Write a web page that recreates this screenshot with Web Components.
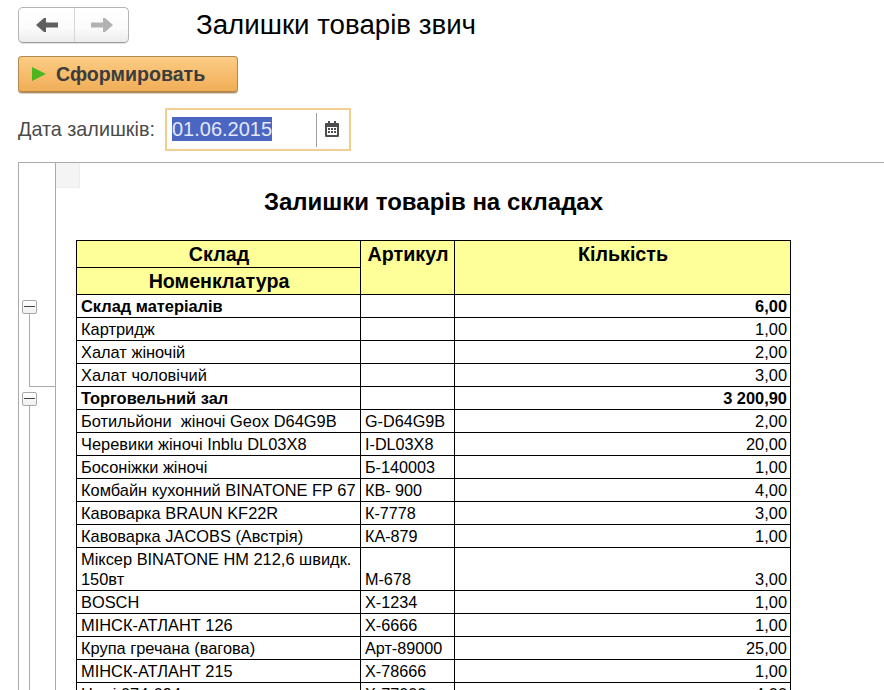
<!DOCTYPE html>
<html lang="uk">
<head>
<meta charset="utf-8">
<title>Залишки товарів</title>
<style>
	html, body {
		height: 100%;
		margin: 0;
		overflow: hidden;
		background: #fff;
		font-family: "Liberation Sans", Arial, sans-serif;
	}
	report-page {
		display: block;
		height: 690px;
		overflow: hidden;
	}
</style>
</head>
<body>
<report-page>
	<nav-buttons slot="nav"></nav-buttons>
	<span slot="title">Залишки товарів звич</span>
	<run-button slot="run">Сформировать</run-button>
	<date-field slot="date" value="01.06.2015">Дата залишків:</date-field>
	<report-sheet slot="sheet" heading="Залишки товарів на складах"></report-sheet>
</report-page>

<script>
class ReportPage extends HTMLElement {
	connectedCallback() {
		this.attachShadow({ mode: 'open' });
		this.shadowRoot.innerHTML = `
			<style>
				:host {
					display: block;
					color: #000;
				}
				.top {
					display: flex;
					align-items: center;
					padding: 7px 0 0 18px;
					height: 36px;
				}
				.title {
					margin-left: 67px;
					font-size: 27.7px;
					line-height: 36px;
				}
				.run {
					padding: 13px 0 0 18px;
				}
				.date {
					padding: 15px 0 0 18px;
				}
				.sheet {
					padding: 11px 0 0 18px;
				}
			</style>
			<div class="top">
				<slot name="nav"></slot>
				<div class="title"><slot name="title"></slot></div>
			</div>
			<div class="run"><slot name="run"></slot></div>
			<div class="date"><slot name="date"></slot></div>
			<div class="sheet"><slot name="sheet"></slot></div>
		`;
	}
}

class NavButtons extends HTMLElement {
	connectedCallback() {
		this.attachShadow({ mode: 'open' });
		this.shadowRoot.innerHTML = `
			<style>
				:host {
					display: flex;
					box-sizing: border-box;
					width: 111px;
					height: 36px;
					border: 1px solid #b4b4b4;
					border-bottom-color: #9c9c9c;
					border-radius: 5px;
					background: linear-gradient(#ffffff, #fbfbfb 60%, #ececec);
					box-shadow: 0 1px 0 #e2e2e2;
				}
				span {
					display: flex;
					align-items: center;
					justify-content: center;
					flex: none;
				}
				.back {
					width: 55px;
					border-right: 1px solid #d6d6d6;
				}
				.forward {
					flex: 1;
				}
				svg {
					width: 22px;
					height: 16px;
				}
			</style>
			<span class="back">
				<svg viewBox="0 0 22 16"><path d="M0 8 8 1h2v4.500h12v5H10V15H8z" fill="#5f5f5f"/></svg>
			</span>
			<span class="forward">
				<svg viewBox="0 0 22 16"><path d="M22 8 14 1h-2v4.500H0v5h12V15h2z" fill="#b3b3b3"/></svg>
			</span>
		`;
	}
}

class RunButton extends HTMLElement {
	connectedCallback() {
		this.attachShadow({ mode: 'open' });
		this.shadowRoot.innerHTML = `
			<style>
				:host {
					display: flex;
					align-items: center;
					box-sizing: border-box;
					width: 220px;
					height: 37px;
					padding-left: 13px;
					gap: 10px;
					border: 1px solid #b08a52;
					border-bottom-width: 2px;
					border-radius: 4px;
					background: linear-gradient(#fbcd84, #f6bb6c 55%, #efae57);
					box-shadow: 0 1px 1px #d8d0c4;
					color: #3c3c3c;
					font-size: 19.6px;
					font-weight: 700;
				}
				svg {
					width: 14px;
					height: 16px;
					flex: none;
				}
			</style>
			<svg viewBox="0 0 14 16"><path d="M0 1v14l14-7z" fill="#4eb61c"/></svg>
			<slot></slot>
		`;
	}
}

class DateField extends HTMLElement {
	connectedCallback() {
		this.attachShadow({ mode: 'open' });
		this.shadowRoot.innerHTML = `
			<style>
				:host {
					display: flex;
					align-items: center;
					height: 43px;
					font-size: 19.8px;
					color: #4a4a4a;
				}
				.label {
					width: 147px;
					white-space: nowrap;
				}
				.box {
					display: flex;
					align-items: center;
					box-sizing: border-box;
					width: 186px;
					height: 43px;
					padding-left: 5px;
					border: 2px solid #f0cf90;
				}
				.value {
					flex: 1;
					font-size: 20px;
				}
				.value b {
					font-weight: 400;
					color: #e4e8f8;
					background: #4a66c0;
					padding: 1px 0;
				}
				.pick {
					display: flex;
					align-items: center;
					justify-content: center;
					box-sizing: border-box;
					width: 33px;
					height: 34px;
					padding: 0 3px 2px 0;
					border-left: 1px solid #a0a0a0;
				}
				svg {
					width: 14px;
					height: 16px;
				}
			</style>
			<span class="label"><slot></slot></span>
			<div class="box">
				<span class="value"><b>${this.getAttribute('value')}</b></span>
				<span class="pick">
					<svg viewBox="0 0 14 16">
						<path fill="#4d4d4d" fill-rule="evenodd" d="M1 2h2V0h2v2h4V0h2v2h2a1 1 0 0 1 1 1v12a1 1 0 0 1-1 1H1a1 1 0 0 1-1-1V3a1 1 0 0 1 1-1zM2 6v8h10V6z"/>
						<path fill="#4d4d4d" d="M3 7h2v2H3zM6 7h2v2H6zM9 7h2v2H9zM3 10h2v2H3zM6 10h2v2H6zM9 10h2v2H9z"/>
					</svg>
				</span>
			</div>
		`;
	}
}

class OutlineGutter extends HTMLElement {
	connectedCallback() {
		this.attachShadow({ mode: 'open' });
		this.shadowRoot.innerHTML = `
			<style>
				:host {
					display: block;
					position: relative;
					flex: none;
					box-sizing: border-box;
					width: 38px;
					border-left: 1px solid #aaa;
					border-right: 1px solid #aaa;
				}
				.box {
					position: absolute;
					left: 3px;
					width: 15px;
					height: 14px;
					box-sizing: border-box;
					border: 1px solid #a8a8a8;
					border-radius: 2px;
					background: linear-gradient(#fff, #f0f0f0);
				}
				.box::after {
					content: "";
					position: absolute;
					left: 1px;
					right: 1px;
					top: 5px;
					height: 1px;
					background: #444;
				}
				.v, .h {
					position: absolute;
					background: #aaa;
				}
				.v {
					left: 10px;
					width: 1px;
				}
				.h {
					left: 10px;
					right: 0;
					height: 1px;
				}
			</style>
			<i class="v" style="top:151px;height:73px"></i>
			<i class="h" style="top:223px"></i>
			<i class="v" style="top:243px;height:300px"></i>
			<div class="box" style="top:137px"></div>
			<div class="box" style="top:229px"></div>
		`;
	}
}

const STOCK_ROWS = [
	['Склад матеріалів', '', '6,00', true],
	['Картридж', '', '1,00'],
	['Халат жіночій', '', '2,00'],
	['Халат чоловічий', '', '3,00'],
	['Торговельний зал', '', '3 200,90', true],
	['Ботильйони&nbsp; жіночі Geox D64G9B', 'G-D64G9B', '2,00'],
	['Черевики жіночі Inblu DL03X8', 'I-DL03X8', '20,00'],
	['Босоніжки жіночі', 'Б-140003', '1,00'],
	['Комбайн кухонний BINATONE FP 67', 'КВ- 900', '4,00'],
	['Кавоварка BRAUN KF22R', 'К-7778', '3,00'],
	['Кавоварка JACOBS (Австрія)', 'КА-879', '1,00'],
	['Міксер BINATONE HM 212,6 швидк. 150вт', 'М-678', '3,00'],
	['BOSCH', 'Х-1234', '1,00'],
	['МІНСК-АТЛАНТ 126', 'Х-6666', '1,00'],
	['Крупа гречана (вагова)', 'Арт-89000', '25,00'],
	['МІНСК-АТЛАНТ 215', 'Х-78666', '1,00'],
	['Ножі 074-094', 'Х-77000', '4,00'],
];

class StockTable extends HTMLElement {
	connectedCallback() {
		this.attachShadow({ mode: 'open' });
		const rows = STOCK_ROWS.map(([name, code, qty, bold]) => `
			<tr class="${bold ? 'group' : ''}">
				<td>${name}</td><td class="code">${code}</td><td class="num">${qty}</td>
			</tr>`).join('');
		this.shadowRoot.innerHTML = `
			<style>
				:host {
					display: block;
					width: 715px;
				}
				table {
					width: 714px;
					table-layout: fixed;
					border-collapse: collapse;
					font-size: 16.4px;
					line-height: 20px;
				}
				th, td {
					border: 1px solid #000;
					padding: 0 3px 0 4px;
				}
				td {
					vertical-align: bottom;
					height: 20px;
					padding-top: 1px;
					padding-bottom: 1px;
				}
				td.code {
					font-size: 16.2px;
				}
				th {
					vertical-align: top;
					height: 27px;
					padding-top: 2px;
					box-sizing: border-box;
					background: #ffff99;
					font-size: 19.7px;
					line-height: 23px;
				}
				.group td {
					font-weight: 700;
				}
				.num {
					text-align: right;
				}
			</style>
			<table>
				<colgroup><col style="width:284px"><col style="width:94px"><col style="width:336px"></colgroup>
				<thead>
					<tr><th>Склад</th><th rowspan="2">Артикул</th><th rowspan="2">Кількість</th></tr>
					<tr><th>Номенклатура</th></tr>
				</thead>
				<tbody>${rows}</tbody>
			</table>
		`;
	}
}

class ReportSheet extends HTMLElement {
	connectedCallback() {
		this.attachShadow({ mode: 'open' });
		this.shadowRoot.innerHTML = `
			<style>
				:host {
					display: flex;
					box-sizing: border-box;
					height: 700px;
					border-top: 1px solid #aaa;
				}
				.corner {
					position: absolute;
					left: 0;
					top: 0;
					width: 24px;
					height: 25px;
					box-sizing: border-box;
					background: #f4f4f4;
					border-right: 1px solid #ededed;
					border-bottom: 1px solid #ededed;
				}
				.content {
					position: relative;
					flex: 1;
					padding-left: 20px;
				}
				h1 {
					width: 715px;
					height: 77px;
					margin: 0;
					padding-top: 26px;
					box-sizing: border-box;
					text-align: center;
					font-size: 24px;
					line-height: 26px;
					font-weight: 700;
				}
			</style>
			<outline-gutter></outline-gutter>
			<div class="content">
				<div class="corner"></div>
				<h1>${this.getAttribute('heading')}</h1>
				<stock-table></stock-table>
			</div>
		`;
	}
}

customElements.define('report-page', ReportPage);
customElements.define('nav-buttons', NavButtons);
customElements.define('run-button', RunButton);
customElements.define('date-field', DateField);
customElements.define('outline-gutter', OutlineGutter);
customElements.define('stock-table', StockTable);
customElements.define('report-sheet', ReportSheet);
</script>
</body>
</html>
